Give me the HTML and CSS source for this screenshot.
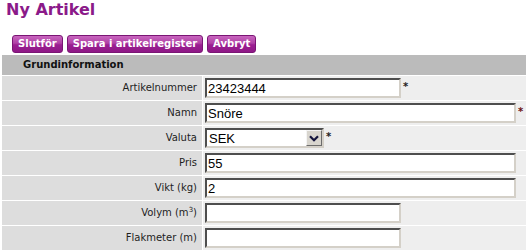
FILE: index.html
```html
<!DOCTYPE html>
<html lang="sv">
<head>
<meta charset="utf-8">
<title>Ny Artikel</title>
<link rel="stylesheet" href="styles.css">
</head>
<body>
<h1 class="title">Ny Artikel</h1>
<div class="actions">
  <button class="btn" type="button">Slutför</button>
  <button class="btn" type="button">Spara i artikelregister</button>
  <button class="btn" type="button">Avbryt</button>
</div>
<div class="form">
  <div class="section">Grundinformation</div>

  <div class="label">Artikelnummer</div>
  <div class="value"><input class="field short" type="text" value="23423444"><span class="req">*</span></div>

  <div class="label">Namn</div>
  <div class="value"><input class="field long" type="text" value="Snöre"><span class="req red">*</span></div>

  <div class="label">Valuta</div>
  <div class="value">
    <div class="select" role="listbox">
      <span class="select-text">SEK</span>
      <span class="select-btn">
        <svg width="10" height="7" viewBox="0 0 10 7"><path d="M1 1.2 L5 5.2 L9 1.2" fill="none" stroke="#14143c" stroke-width="2.2"/></svg>
      </span>
    </div><span class="req">*</span>
  </div>

  <div class="label">Pris</div>
  <div class="value"><input class="field long" type="text" value="55"></div>

  <div class="label">Vikt (kg)</div>
  <div class="value"><input class="field long" type="text" value="2"></div>

  <div class="label">Volym (m<sup>3</sup>)</div>
  <div class="value"><input class="field short" type="text" value=""></div>

  <div class="label">Flakmeter (m)</div>
  <div class="value"><input class="field short" type="text" value=""></div>
</div>
</body>
</html>
```
FILE: styles.css
```css
html, body {
  margin: 0;
  padding: 0;
  background: #ffffff;
}
body {
  font-family: "DejaVu Sans", Verdana, sans-serif;
  font-size: 10px;
  color: #111;
}
.title {
  margin: 0;
  padding: 0 0 0 6px;
  height: 20px;
  line-height: 19px;
  font-size: 16px;
  font-weight: bold;
  color: #8b1a89;
}
.actions {
  display: flex;
  gap: 4px;
  padding: 15px 0 0 12px;
  height: 18px;
}
.btn {
  height: 18px;
  margin: 0;
  padding: 0 5px;
  border: 1px solid #7a1574;
  border-radius: 3px;
  background: linear-gradient(#c865be 0%, #b042a6 45%, #9c1f92 55%, #8e1886 100%);
  color: #ffffff;
  font-family: "DejaVu Sans", Verdana, sans-serif;
  font-size: 10px;
  font-weight: bold;
  line-height: 16px;
}
.form {
  margin: 2px 0 0 2px;
  display: grid;
  grid-template-columns: 200px 323px;
  grid-template-rows: 20px;
  grid-auto-rows: 24px;
  gap: 1px;
  background: #ffffff;
}
.section {
  grid-column: 1 / -1;
  background: #bbbbbb;
  font-weight: bold;
  line-height: 20px;
  padding-left: 21px;
  color: #111;
}
.label {
  background: #dddddd;
  text-align: right;
  padding-right: 5px;
  line-height: 24px;
  color: #1e1e1e;
}
.label sup {
  font-size: 7px;
  line-height: 0;
  vertical-align: 4px;
}
.value {
  background: #eeeeee;
  display: flex;
  align-items: center;
  padding-left: 2px;
}
.field {
  box-sizing: border-box;
  height: 20px;
  margin: 0;
  padding: 0 0 0 1px;
  border: 2px solid;
  border-color: #4e4e4e #d4d0c8 #d4d0c8 #4e4e4e;
  background: #ffffff;
  font-family: "Liberation Sans", Arial, sans-serif;
  font-size: 13px;
  color: #000;
  outline: none;
}
.short { width: 196px; }
.long { width: 311px; }
.req {
  margin-left: 2px;
  align-self: flex-start;
  margin-top: 6px;
  font-size: 10px;
  line-height: 10px;
  font-weight: bold;
  color: #222;
}
.req.red { color: #6a1010; }
.select {
  box-sizing: border-box;
  width: 119px;
  height: 20px;
  display: flex;
  align-items: center;
  border: 2px solid;
  border-color: #4e4e4e #d4d0c8 #d4d0c8 #4e4e4e;
  background: #ffffff;
  font-family: "Liberation Sans", Arial, sans-serif;
  font-size: 13px;
  color: #000;
}
.select-text {
  flex: 1;
  padding-left: 2px;
}
.select-btn {
  box-sizing: border-box;
  width: 16px;
  height: 16px;
  display: flex;
  align-items: center;
  justify-content: center;
  background: #d8d5ce;
  border: 1px solid;
  border-color: #f4f4f4 #6c6c6c #6c6c6c #f4f4f4;
}
```
